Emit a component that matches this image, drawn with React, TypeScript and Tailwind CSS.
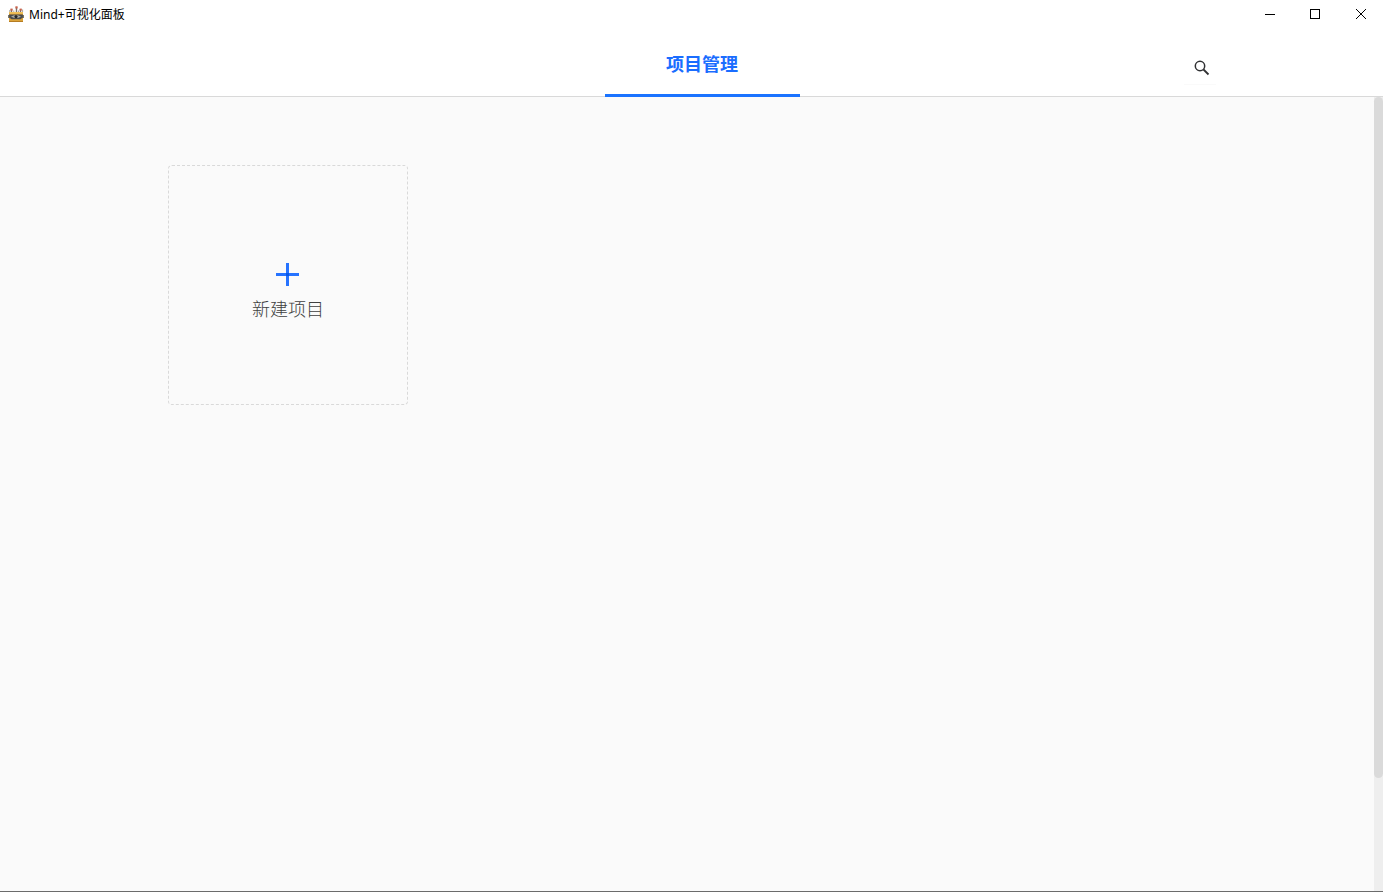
import React from "react";

function RobotIcon() {
  return (
    <svg className="h-4 w-4" viewBox="0 0 16 16" aria-hidden="true">
      <path d="M3.5 3v3M8.5 1v5M12.5 3v3" stroke="#77706a" strokeWidth="1.4" />
      <path d="M1.8 4v2M14.6 3.5V6M5.8 4.5V6M10.5 4.5V6" stroke="#a9a29a" strokeWidth="1" />
      <rect x="2.4" y="2.6" width="2.2" height="2" fill="#c9604a" />
      <rect x="7.4" y="0.3" width="2.2" height="2.2" fill="#c9604a" />
      <rect x="11.6" y="2.6" width="2.2" height="2" fill="#c9604a" />
      <path d="M1 6h14v10H1z" fill="#dba33a" />
      <path d="M1 6h14v1.8H1z" fill="#efbf58" />
      <path d="M0 9h16v3H0z" fill="#7d7768" />
      <path d="M1.2 8.4h13.6v3L12.4 13.2H3.6L1.2 11.4z" fill="#4b4d4d" />
      <path d="M3 10.6Q8 7.6 13 10.6 8 13.6 3 10.6z" fill="#a9aaa4" />
      <circle cx="8" cy="10.6" r="1.6" fill="#242628" />
      <path d="M1 15h14v1H1z" fill="#b57c23" />
    </svg>
  );
}

function WindowButton({ label, children }: { label: string; children: React.ReactNode }) {
  return (
    <button type="button" aria-label={label} className="flex h-7 w-[46px] items-center justify-center">
      <svg className="h-3 w-3.5" viewBox="0 0 14 12" fill="none" stroke="#000">
        {children}
      </svg>
    </button>
  );
}

export default function App() {
  return (
    <div className="flex min-h-screen flex-col border-b border-[#6b6b6b] bg-[#fafafa] font-['Noto_Sans','Noto_Sans_CJK_SC',sans-serif]">
      <div className="flex h-7 items-center justify-between bg-white pl-2">
        <div className="flex items-center gap-[5px]">
          <RobotIcon />
          <h1 className="pt-0.5 text-xs text-black">Mind+可视化面板</h1>
        </div>
        <div className="flex">
          <WindowButton label="最小化">
            <path d="M4 6.5h10" shapeRendering="crispEdges" />
          </WindowButton>
          <WindowButton label="最大化">
            <path d="M3.5 1.5h9v9h-9z" shapeRendering="crispEdges" />
          </WindowButton>
          <WindowButton label="关闭">
            <path d="M3 1l10 10M13 1L3 11" />
          </WindowButton>
        </div>
      </div>

      <header className="flex h-[69px] items-stretch border-b border-[#d9d9d9] bg-white pr-[167px] pl-[188px]">
        <div className="flex-1" />
        <nav className="-mb-px flex">
          <a
            href="#projects"
            className="flex w-[195px] items-center justify-center border-b-3 border-[#1a73ff] pt-1.5 text-lg font-bold text-[#1a6dff]"
          >
            项目管理
          </a>
        </nav>
        <div className="flex flex-1 items-start justify-end pt-6">
          <button
            type="button"
            aria-label="搜索"
            className="flex h-[33px] w-8 items-center justify-center border-b border-[#fafafa] pl-1"
          >
            <svg className="h-4 w-4" viewBox="0 0 16 16" fill="none" stroke="#303133">
              <circle cx="6" cy="6" r="4.7" strokeWidth="1.5" />
              <path d="M9.5 9.5l5 5" strokeWidth="1.8" />
            </svg>
          </button>
        </div>
      </header>

      <div className="flex flex-1">
        <main className="flex-1 px-[168px] pt-[68px]">
          <button
            type="button"
            className="flex h-60 w-60 flex-col items-center justify-center gap-2 rounded border border-dashed border-[#d9d9d9] pt-4"
          >
            <svg className="h-6 w-6" viewBox="0 0 24 24" shapeRendering="crispEdges" aria-hidden="true">
              <path d="M0 10h23v3H0zM10 0h3v23h-3z" fill="#2673ff" />
              <path d="M10 10h3v3h-3z" fill="#0858e8" />
            </svg>
            <span className="text-lg font-light text-[#404040]">新建项目</span>
          </button>
        </main>
        <div className="flex w-[9px] flex-col bg-[#eeeeee]" aria-hidden="true">
          <div className="flex-6 rounded-full bg-[#dadada]" />
          <div className="flex-1" />
        </div>
      </div>
    </div>
  );
}
